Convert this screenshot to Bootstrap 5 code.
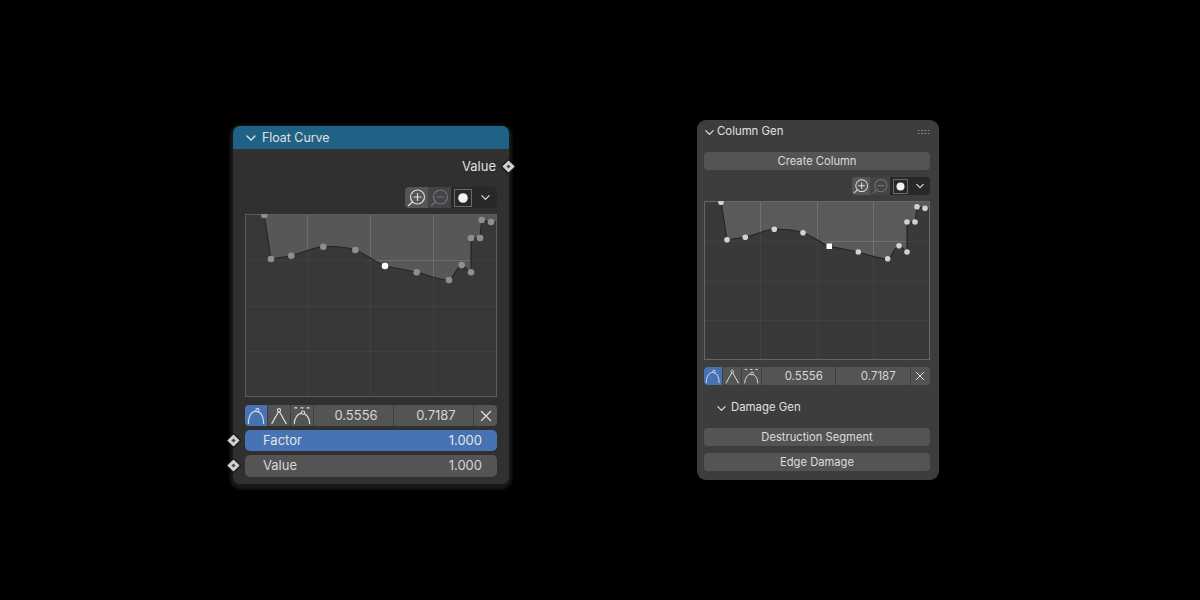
<!DOCTYPE html>
<html lang="en">
<head>
  <meta charset="UTF-8" />
  <title>Float Curve</title>
  <link href="https://cdn.jsdelivr.net/npm/bootstrap@5.3.3/dist/css/bootstrap.min.css" rel="stylesheet" />
  <style>
    body { background: #000; font-family: Inter, "Liberation Sans", sans-serif; color: #e0e0e0; }
    .win { position: absolute; }

    .fc-node { left: 233px; top: 126px; width: 276px; height: 358px; background: #303030; border-radius: 7px; box-shadow: 0 2px 3px 3px #191919; font-size: 13px; }
    .fc-head { height: 23px; padding-left: 12px; gap: 5px; background: #1f6285; border-radius: 7px 7px 0 0; font-size: 12.4px; }
    .fc-title { padding-top: 2px; }
    .fc-body { padding: 0 12px; }
    .fc-output { height: 35px; padding: 1px 1px 0 0; }
    .socket { position: absolute; width: 9px; height: 9px; background: #d2d2d2; outline: 1px solid #151515; transform: rotate(45deg); }
    .socket::after { content: ""; position: absolute; left: 3px; top: 3px; width: 3px; height: 3px; background: #4a4a4a; }
    .sock-out { left: 271px; top: 35.5px; }
    .sock-fac { left: -4.5px; top: 310px; }
    .sock-val { left: -4.5px; top: 335px; }

    .tools { height: 21px; margin-top: 3px; margin-bottom: 6px; }
    .tool { width: 23px; height: 100%; background: #444; }
    .tool.on { background: #555; border-radius: 4px 0 0 4px; }
    .tool.dark { background: #282828; }
    .tool.end { background: #282828; border-radius: 0 4px 4px 0; }

    .hrow { height: 21px; margin-top: 8px; }
    .hbtn { width: 23px; height: 100%; background: #545454; border-right: 1px solid #3e3e3e; }
    .hbtn:first-child { border-radius: 4px 0 0 4px; }
    .hbtn.active { background: #4772b3; }
    .hnum { flex: 1 1 0; height: 100%; padding-left: 5px; background: #545454; border-right: 1px solid #3e3e3e; color: #d6d6d6; }
    .hclose { width: 23px; height: 100%; background: #545454; border-radius: 0 4px 4px 0; }

    .slider { height: 22px; margin-top: 4px; padding: 0 15px 0 18px; border-radius: 5px; background: #545454; color: #d6d6d6; }
    .slider.blue { height: 21px; background: #4772b3; color: #e4e4e4; }

    .cg-panel { left: 697px; top: 120px; width: 242px; height: 360px; background: #3d3d3d; border-radius: 9px; font-size: 11.2px; padding: 0 9px 0 7px; }
    .cg-head { height: 22px; padding-top: 2px; font-size: 11.4px; gap: 2px; }
    .grip { width: 13.2px; height: 6px; background-image: radial-gradient(#8a8a8a 0.7px, transparent 0.9px); background-size: 3.3px 3px; }
    .cg-btn { height: 18px; padding-top: 1px; border-radius: 4px; background: #545454; color: #dcdcdc; }
    .cg-first { margin-top: 10px; }
    .cg-tools { height: 18px; margin: 7px 0 6px; }
    .cg-tools .tool { width: 20px; }
    .cg-tools .tool:first-child { width: 18.5px; }
    .cg-hrow { height: 18px; margin-top: 7px; }
    .cg-hrow .hbtn { width: 19.5px; }
    .cg-hrow .hbtn:first-child { width: 18.5px; }
    .cg-hrow .hclose { width: 19.5px; }
    .cg-hrow .hnum { padding: 2px 0 0 11px; font-size: 11.5px; }
    .cg-sub { height: 43px; padding: 3px 0 0 12px; gap: 4px; font-size: 11.4px; }
    .gap-7 { height: 7px; }
  </style>
</head>

<body>
  <svg width="0" height="0" class="position-absolute">
    <symbol id="i-zoom-in" viewBox="0 0 22 22">
      <circle cx="11.5" cy="10" r="7" fill="none" stroke="currentColor" stroke-width="1.2" />
      <path d="M11.5 6.5v7M8 10h7M6.5 15l-4 3.5" fill="none" stroke="currentColor" stroke-width="1.2" stroke-linecap="round" />
    </symbol>
    <symbol id="i-zoom-out" viewBox="0 0 22 22">
      <circle cx="11.5" cy="10" r="7" fill="none" stroke="currentColor" stroke-width="1.2" />
      <path d="M8 10h7M6.5 15l-4 3.5" fill="none" stroke="currentColor" stroke-width="1.2" stroke-linecap="round" />
    </symbol>
    <symbol id="i-auto" viewBox="0 0 22 22">
      <path d="M3 19.5C3 11 6.5 6.5 11 6.5S19 11 19 19.5" fill="none" stroke="currentColor" stroke-width="1.2" stroke-linecap="round" />
      <circle cx="12.5" cy="5.5" r="1.7" fill="#4772b3" stroke="currentColor" stroke-width="1.1" />
    </symbol>
    <symbol id="i-vector" viewBox="0 0 22 22">
      <path d="M10.2 7.5 3.5 19.5M11.8 7.5 18.5 19.5" fill="none" stroke="currentColor" stroke-width="1.2" stroke-linecap="round" />
      <circle cx="11" cy="5.5" r="1.7" fill="none" stroke="currentColor" stroke-width="1.1" />
    </symbol>
    <symbol id="i-clamp" viewBox="0 0 22 22">
      <path d="M3 19.5C3 14 6.5 8.5 11 8.5S19 14 19 19.5" fill="none" stroke="currentColor" stroke-width="1.2" stroke-linecap="round" />
      <circle cx="12" cy="8" r="1.7" fill="#545454" stroke="currentColor" stroke-width="1.1" />
      <path d="M3 3h16" fill="none" stroke="currentColor" stroke-width="1.1" stroke-dasharray="3 3.5" />
    </symbol>
    <symbol id="i-chev" viewBox="0 0 12 12">
      <path d="M2 4l4 4 4-4" fill="none" stroke="currentColor" stroke-width="1.3" stroke-linecap="round" stroke-linejoin="round" />
    </symbol>
    <symbol id="i-x" viewBox="0 0 12 12">
      <path d="M1.5 1.5l9 9M10.5 1.5l-9 9" fill="none" stroke="currentColor" stroke-width="1.2" stroke-linecap="round" />
    </symbol>
  </svg>

  <!-- node editor window -->
  <div class="win fc-node">
    <div class="fc-head d-flex align-items-center">
      <svg width="12" height="12"><use href="#i-chev" /></svg>
      <span class="fc-title">Float Curve</span>
    </div>
    <div class="fc-body">
      <div class="fc-output d-flex align-items-center justify-content-end">Value</div>
      <div class="tools d-flex justify-content-end">
        <div class="tool on d-flex align-items-center justify-content-center"><svg width="22" height="22"><use href="#i-zoom-in" /></svg></div>
        <div class="tool d-flex align-items-center justify-content-center text-secondary"><svg width="22" height="22"><use href="#i-zoom-out" /></svg></div>
        <div class="tool dark d-flex align-items-center justify-content-center">
          <svg width="18" height="18"><rect x=".5" y=".5" width="17" height="17" fill="none" stroke="#6a6a6a" /><circle cx="9" cy="9" r="4.8" fill="#f2f2f2" /></svg>
        </div>
        <div class="tool end d-flex align-items-center justify-content-center"><svg width="11" height="11"><use href="#i-chev" /></svg></div>
      </div>
      <svg class="d-block" width="252" height="183" viewBox="245 214 252 183">
        <rect x="245" y="214" width="252" height="183" fill="#383838" />
        <path d="M264 214L271 259L291 255.7C303 253 313 247 323 246.7C338 246 347 247 355 250C366 254 375 262 385 266L417 272.3C428 275 438 280 449 280C453 280 457 265 462 265C465 266 468 271 471 272.3L471 238L480 238L481.7 220C484 220 488 222 491 222L497 222L497 214Z" fill="#575757" />
        <path d="M307.5 214V397M370.5 214V397M433.5 214V397M245 260.5H497M245 306.5H497M245 351.5H497" stroke="#fff" stroke-opacity=".045" fill="none" />
        <path d="M307.5 214V250M370.5 214V257M433.5 214V276M375 260.5H471" stroke="#fff" stroke-opacity=".09" fill="none" />
        <path d="M264 214L271 259L291 255.7C303 253 313 247 323 246.7C338 246 347 247 355 250C366 254 375 262 385 266L417 272.3C428 275 438 280 449 280C453 280 457 265 462 265C465 266 468 271 471 272.3L471 238L480 238L481.7 220C484 220 488 222 491 222L497 222" stroke="#242424" stroke-width="1.1" fill="none" />
        <rect x="245.5" y="214.5" width="251" height="182" fill="none" stroke="#5c5c5c" />
        <g fill="#8e8e8e">
          <circle cx="264.3" cy="215" r="3.3" /><circle cx="271" cy="259" r="3.3" /><circle cx="291.3" cy="255.7" r="3.3" />
          <circle cx="323.3" cy="246.7" r="3.3" /><circle cx="355.3" cy="250" r="3.3" /><circle cx="416.7" cy="272.3" r="3.3" />
          <circle cx="449" cy="280" r="3.3" /><circle cx="461.7" cy="265" r="3.3" /><circle cx="471" cy="272.3" r="3.3" />
          <circle cx="471" cy="238" r="3.3" /><circle cx="480" cy="238" r="3.3" /><circle cx="481.7" cy="220" r="3.3" /><circle cx="491" cy="222" r="3.3" />
        </g>
        <circle cx="385" cy="266" r="3.3" fill="#fff" />
      </svg>
      <div class="hrow d-flex align-items-stretch">
        <div class="hbtn active d-flex align-items-center justify-content-center"><svg width="22" height="21"><use href="#i-auto" /></svg></div>
        <div class="hbtn d-flex align-items-center justify-content-center"><svg width="22" height="21"><use href="#i-vector" /></svg></div>
        <div class="hbtn d-flex align-items-center justify-content-center"><svg width="22" height="21"><use href="#i-clamp" /></svg></div>
        <div class="hnum d-flex align-items-center justify-content-center">0.5556</div>
        <div class="hnum d-flex align-items-center justify-content-center">0.7187</div>
        <div class="hclose d-flex align-items-center justify-content-center"><svg width="12" height="12"><use href="#i-x" /></svg></div>
      </div>
      <div class="slider blue d-flex align-items-center justify-content-between"><span>Factor</span><span>1.000</span></div>
      <div class="slider d-flex align-items-center justify-content-between"><span>Value</span><span>1.000</span></div>
    </div>
    <i class="socket sock-out"></i>
    <i class="socket sock-fac"></i>
    <i class="socket sock-val"></i>
  </div>

  <!-- sidebar panel window -->
  <div class="win cg-panel">
    <div class="cg-head d-flex align-items-center">
      <svg width="11" height="11"><use href="#i-chev" /></svg>
      <span class="flex-grow-1">Column Gen</span>
      <div class="grip"></div>
    </div>
    <div class="cg-btn cg-first d-flex align-items-center justify-content-center">Create Column</div>
    <div class="cg-tools d-flex justify-content-end">
      <div class="tool on d-flex align-items-center justify-content-center"><svg width="19" height="19"><use href="#i-zoom-in" /></svg></div>
      <div class="tool d-flex align-items-center justify-content-center text-secondary"><svg width="19" height="19"><use href="#i-zoom-out" /></svg></div>
      <div class="tool dark d-flex align-items-center justify-content-center">
        <svg width="15" height="15"><rect x=".5" y=".5" width="14" height="14" fill="none" stroke="#6a6a6a" /><circle cx="7.5" cy="7.5" r="4" fill="#f2f2f2" /></svg>
      </div>
      <div class="tool end d-flex align-items-center justify-content-center"><svg width="10" height="10"><use href="#i-chev" /></svg></div>
    </div>
    <svg class="d-block" width="226" height="159" viewBox="704 201 226 159">
      <rect x="704" y="201" width="226" height="159" fill="#393939" />
      <path d="M721 201.5L727 239.7L745.3 237.3C755 235 765 229.5 774.3 229.3C785 229 795 230 803 232.7C813 236 820 243 829.3 246.3L858.3 252C868 255 878 258.7 887.7 258.7C892 258.7 894 246 899 245.7C902 246 904 250 907 252L907 222L915 222L917 206.7C919 207 922 208.3 925 208.3L930 208.3L930 201.5Z" fill="#5a5a5a" />
      <path d="M760.5 201V360M817.5 201V360M873.5 201V360M704 241.5H930M704 281.5H930M704 320.5H930" stroke="#fff" stroke-opacity=".045" fill="none" />
      <path d="M760.5 201V233M817.5 201V238M873.5 201V255M822 241.5H907" stroke="#fff" stroke-opacity=".09" fill="none" />
      <path d="M704 201.5L721 201.5L727 239.7L745.3 237.3C755 235 765 229.5 774.3 229.3C785 229 795 230 803 232.7C813 236 820 243 829.3 246.3L858.3 252C868 255 878 258.7 887.7 258.7C892 258.7 894 246 899 245.7C902 246 904 250 907 252L907 222L915 222L917 206.7C919 207 922 208.3 925 208.3L930 208.3" stroke="#222" stroke-width="1.1" fill="none" />
      <rect x="704.5" y="201.5" width="225" height="158" fill="none" stroke="#666" />
      <g fill="#d2d2d2">
        <circle cx="721" cy="202.3" r="2.8" /><circle cx="727" cy="239.7" r="2.8" /><circle cx="745.3" cy="237.3" r="2.8" />
        <circle cx="774.3" cy="229.3" r="2.8" /><circle cx="803" cy="232.7" r="2.8" /><circle cx="858.3" cy="252" r="2.8" />
        <circle cx="887.7" cy="258.7" r="2.8" /><circle cx="899" cy="245.7" r="2.8" /><circle cx="907" cy="252" r="2.8" />
        <circle cx="907" cy="222" r="2.8" /><circle cx="915" cy="222" r="2.8" /><circle cx="917" cy="206.7" r="2.8" /><circle cx="925" cy="208.3" r="2.8" />
      </g>
      <rect x="826.5" y="243.5" width="5.5" height="5.5" fill="#fff" />
    </svg>
    <div class="cg-hrow hrow d-flex align-items-stretch">
      <div class="hbtn active d-flex align-items-center justify-content-center"><svg width="19" height="18"><use href="#i-auto" /></svg></div>
      <div class="hbtn d-flex align-items-center justify-content-center"><svg width="19" height="18"><use href="#i-vector" /></svg></div>
      <div class="hbtn d-flex align-items-center justify-content-center"><svg width="19" height="18"><use href="#i-clamp" /></svg></div>
      <div class="hnum d-flex align-items-center justify-content-center">0.5556</div>
      <div class="hnum d-flex align-items-center justify-content-center">0.7187</div>
      <div class="hclose d-flex align-items-center justify-content-center"><svg width="10" height="10"><use href="#i-x" /></svg></div>
    </div>
    <div class="cg-sub d-flex align-items-center">
      <svg width="11" height="11"><use href="#i-chev" /></svg>
      <span>Damage Gen</span>
    </div>
    <div class="cg-btn d-flex align-items-center justify-content-center">Destruction Segment</div>
    <div class="gap-7"></div>
    <div class="cg-btn d-flex align-items-center justify-content-center">Edge Damage</div>
  </div>
</body>
</html>
